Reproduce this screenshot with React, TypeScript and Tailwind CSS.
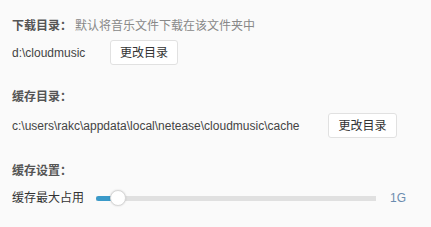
export default function App() {
  return (
    <div
      className="w-[431px] h-[227px] bg-[#fafafa] px-3 pt-[18px] text-[12px] text-[#333]"
      style={{ fontFamily: '"Liberation Sans", "Noto Sans CJK SC", sans-serif' }}
    >
      <div className="flex items-center h-[16px]">
        <span className="font-bold text-[#555]">下载目录：</span>
        <span className="ml-[3px] text-[#888]">默认将音乐文件下载在该文件夹中</span>
      </div>
      <div className="flex items-center mt-[6px] h-[25px]">
        <span className="w-[98px] text-[#444]">d:\cloudmusic</span>
        <button className="w-[68px] h-[25px] bg-white border border-[#e1e1e1] rounded-[3px] text-[12px] text-[#333]">
          更改目录
        </button>
      </div>

      <div className="flex items-center mt-[24px] h-[16px]">
        <span className="font-bold text-[#555]">缓存目录：</span>
      </div>
      <div className="flex items-center mt-[8px] h-[25px]">
        <span className="w-[316px] text-[#444]">c:\users\rakc\appdata\local\netease\cloudmusic\cache</span>
        <button className="w-[69px] h-[25px] bg-white border border-[#e1e1e1] rounded-[3px] text-[12px] text-[#333]">
          更改目录
        </button>
      </div>

      <div className="flex items-center mt-[25px] h-[16px]">
        <span className="font-bold text-[#555]">缓存设置：</span>
      </div>
      <div className="flex items-center mt-[10px] h-[18px]">
        <span className="w-[84px] text-[#333]">缓存最大占用</span>
        <div className="relative w-[280px] h-[5px] bg-[#e0e0e0]">
          <div className="absolute left-0 top-0 w-[18px] h-[5px] bg-[#3a9ac9] rounded-l-[3px]" />
          <div className="absolute left-[14px] top-[-6px] w-[16px] h-[16px] rounded-full bg-white border border-[#d8d8d8] shadow-[0_0_2px_rgba(0,0,0,0.15)]" />
        </div>
        <span className="ml-[14px] text-[#6a8caf]">1G</span>
      </div>
    </div>
  )
}
